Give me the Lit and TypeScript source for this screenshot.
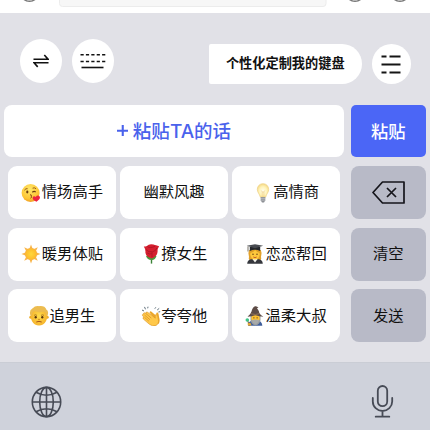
import { LitElement, html, css, svg } from "lit";
import { customElement, property } from "lit/decorators.js";

const art: Record<string, unknown> = {
  kiss: svg`
    <defs><radialGradient id="g" cx=".45" cy=".3" r=".75"><stop offset="0" stop-color="#ffe86b"/><stop offset=".7" stop-color="#fdc534"/><stop offset="1" stop-color="#ec9420"/></radialGradient></defs>
    <circle cx="9.6" cy="10" r="9" fill="url(#g)"/>
    <path d="M3.4 7.2q1.4-2 3.2-1.5M11.6 5.2q1.8-1 3.4.5" fill="none" stroke="#9a5c14" stroke-width="1"/>
    <ellipse cx="6.3" cy="9" rx="1.1" ry="1.4" fill="#6d3d10"/>
    <path d="M11.3 9.2q1.7-1.4 3.4-.3" fill="none" stroke="#6d3d10" stroke-width="1.2"/>
    <path d="M9 11.7q2.4.2 1 1.5q2 .6-.6 2" fill="none" stroke="#8b4614" stroke-width="1"/>
    <path d="M15.400 18.700q-4.300-2-3.700-4.300q1-2 3-.3q1.600-2.400 3.800-.9q1.800 2.300-3.100 5.500z" fill="#ed2440"/>`,
  bulb: svg`
    <defs><radialGradient id="g" cx=".5" cy=".55" r=".6"><stop offset="0" stop-color="#fffef0"/><stop offset=".55" stop-color="#fff3b8"/><stop offset="1" stop-color="#f3d278"/></radialGradient></defs>
    <path d="M10 .7c-3.500 0-5.700 2.600-5.700 5.700c0 3.200 2.300 4.300 3 7.800h5.400c.7-3.500 3-4.600 3-7.800c0-3.100-2.200-5.700-5.700-5.700z" fill="url(#g)" stroke="#eed28a" stroke-width=".7"/>
    <path d="M8.300 7.500l1 1.500h1.500l1-1.500M9.200 9v5M10.900 9v5" stroke="#e9c16c" stroke-width=".5" fill="none"/>
    <path d="M7.700 14h4.600v3.200l-1.300 2.300H9l-1.300-2.300z" fill="#8d9095"/>
    <path d="M7.700 15.300h4.600M7.900 17.100h4.200" stroke="#d5d7da" stroke-width=".6"/>`,
  sun: svg`
    <defs><radialGradient id="g"><stop offset="0" stop-color="#ffd83d"/><stop offset="1" stop-color="#fdb92b"/></radialGradient></defs>
    <path d="M10 .4l1.500 4h-3zM10 19.600l1.500-4h-3zM.4 10l4-1.500v3zM19.600 10l-4-1.500v3zM3.200 3.200l3.900 1.800-2.100 2.100zM16.800 3.200l-3.900 1.800 2.100 2.100zM3.200 16.800l3.900-1.800-2.100-2.100zM16.800 16.800l-3.900-1.800 2.100-2.100z" fill="#f9b64c"/>
    <circle cx="10" cy="10" r="5.800" fill="url(#g)" stroke="#f5a52c" stroke-width=".6"/>`,
  rose: svg`
    <path d="M10.500 12v7.600" stroke="#3b8337" stroke-width="1.400"/>
    <path d="M5 12q3-1 5.500 2.500q2-3.500 5-2.500q-1.500 4.600-5 4q-4 .2-5.500-4z" fill="#4b9a3e"/>
    <path d="M2.800 2.500q1.800 0 3.100-.5Q8-.5 12.500.5q1.300.8 2.600.8l3 .9q-1.800 2.600-1.500 5.600q-.4 4.400-5.800 6.700Q5.200 13.200 4.400 8.800q.4-3.400-1.600-6.300z" fill="#d51f2f"/>
    <path d="M6.300 2.500q2.800 2.300 7.800-.3M5 5.500q2.500 3.200 6.500 2.300q3.500-.8 4.300-3.800M6.300 9q2.200 1.700 4.400.7M11 8.400v4.600" fill="none" stroke="#a81424" stroke-width=".8"/>`,
  grad: svg`
    <path d="M4.200 6Q2.600 9 4 13q-.8 1.500.5 3h11q1.300-1.500.5-3q1.400-4-.2-7z" fill="#e2a12a"/>
    <path d="M2.200 19.800q.2-4 3.800-4.600h8q3.600.6 3.800 4.600z" fill="#35373d"/>
    <path d="M7.400 15l2.600 3.500 2.600-3.500z" fill="#f5f5ee"/>
    <ellipse cx="10" cy="10.300" rx="4.700" ry="5.300" fill="#ffc83c"/>
    <path d="M5.200 9q3.200-.5 5-3q1.600 2.600 4.700 3V5.400H5.200z" fill="#df9f27"/>
    <circle cx="8" cy="10.300" r=".7" fill="#58330f"/><circle cx="12" cy="10.300" r=".7" fill="#58330f"/>
    <path d="M8.300 13q1.700 1.300 3.400 0" fill="none" stroke="#b74422" stroke-width=".8"/>
    <path d="M4.800 3h10.400v4Q10 4.700 4.800 7z" fill="#25272c"/>
    <path d="M1.800 1.800L10 .3l8.200 1.500L10 4.300z" fill="#484b51"/>
    <path d="M3 2.300v5.200" stroke="#575044" stroke-width=".8"/>`,
  man: svg`
    <defs><radialGradient id="g" cx=".5" cy=".5" r=".6"><stop offset="0" stop-color="#ffdc4b"/><stop offset="1" stop-color="#f4ad28"/></radialGradient></defs>
    <circle cx="1.900" cy="11.200" r="1.600" fill="#efad28"/><circle cx="18.100" cy="11.200" r="1.600" fill="#efad28"/>
    <path d="M1.800 9.500Q1.500.3 10 .4Q18.500.3 18.200 9.500Q18 16 14 18.500q-4 2.200-8 0Q2 16 1.800 9.500z" fill="url(#g)"/>
    <path d="M1.300 9Q0 4 3.500 2.500Q6-.3 10 .2Q16-.4 17.300 3.500Q20 5 18.700 9l-1.300 1q0-3.500-2.400-4.500Q9 7 5.300 5Q3 6.200 2.600 10z" fill="#ecbc50"/>
    <path d="M5 9.400q1.400-1.200 3 0M12 9.400q1.600-1.200 3 0" stroke="#9c6b1d" stroke-width=".8" fill="none"/>
    <ellipse cx="6.700" cy="11.300" rx="1.100" ry="1.200" fill="#59350e"/><ellipse cx="13.300" cy="11.300" rx="1.100" ry="1.200" fill="#59350e"/>
    <path d="M9 13.400h2" stroke="#c6821a" stroke-width=".8"/>
    <path d="M7.300 16q2.700-1.300 5.400 0" stroke="#a4511c" stroke-width="1" fill="none"/>`,
  clap: svg`
    <path d="M3 5l-2-1M4.500 3.300L3.500.9M6.700 2.300l.3-1.600M13.800 2.700l1-1.400M16.200 4l2-1.600M17.400 6l1.800-.3" stroke="#60717c" stroke-width="1"/>
    <path d="M8.500 6.500q.8-2 2.300-.6l4.700 4q-.8-4 1-3.400q1.200.4 1.500 4.600q1.500 4.200-.5 7z" fill="#eca72b"/>
    <path d="M2.400 7.400q.8-1.300 2.100-.2l.4.300q-.2-2.200 1.800-1.200l7.600 5.900q-.5-4.200 1.100-3.600q1.500.4 1.900 4.700q1 4.400-2.200 6.100q-3.400 1.400-6.700-1.100l-6.100-5.300q-1-1.600.6-1.900l-1.300-1.300q-.8-1.500.8-1.500z" fill="#ffc849" stroke="#d9942a" stroke-width=".6"/>
    <path d="M4.700 7.400l5.600 4.700M3.500 9l5.500 4.800M3.500 11.300l4.300 3.800" stroke="#d9942a" stroke-width=".8"/>`,
  mage: svg`
    <path d="M3 19.700q.3-4.400 4-5h6.500q3.500.8 3.800 5z" fill="#3f5e9b"/>
    <path d="M5.500 10h10v4q-.4 4-5 5.600q-4.600-1.600-5-5.600z" fill="#9a9d9e"/>
    <ellipse cx="10.500" cy="12" rx="4.200" ry="3.800" fill="#ffc232"/>
    <path d="M6.800 14.300q2-.8 3.700-.7q1.700-.1 3.700.7q-.7 3.100-3.700 4q-3-.9-3.700-4z" fill="#a8aaa9"/>
    <circle cx="8.900" cy="11.800" r=".6" fill="#573610"/><circle cx="12.100" cy="11.800" r=".6" fill="#573610"/>
    <path d="M2.500 10.800q3-2 4-5.200Q7.300 1.500 10 .3q2.200-.5 3.500 1.800l-1.600-.2q2.400 3 2.500 5.400q1.500 2.300 4 3.500q-4-.5-8-1.500q-4 1.300-7.900 1.500z" fill="#5d4c46"/>
    <path d="M6 7.800q4.500 1.500 8.500-.2" stroke="#91725a" stroke-width="1" fill="none"/>
    <path d="M2.500 14l1.800 5.700" stroke="#75503b" stroke-width="1"/>
    <circle cx="2.300" cy="14" r="1.800" fill="#3ec584"/><path d="M2.500 17.500l3-.7 1 2.800H3z" fill="#e8ab31"/>`,
};

@customElement("emoji-art")
class EmojiArt extends LitElement {
  @property() name = "";
  static styles = css`
    :host { display: block; width: 20px; height: 20px; flex: none; }
    svg { display: block; width: 20px; height: 20px; }
  `;
  render() {
    return html`<svg viewBox="0 0 20 20">${art[this.name]}</svg>`;
  }
}

const phrases = [
  ["kiss", "情场高手"], ["", "幽默风趣"], ["bulb", "高情商"],
  ["sun", "暖男体贴"], ["rose", "撩女生"], ["grad", "恋恋帮回"],
  ["man", "追男生"], ["clap", "夸夸他"], ["mage", "温柔大叔"],
];

@customElement("app-root")
class AppRoot extends LitElement {
  static styles = css`
    :host {
      display: flex; flex-direction: column; width: 430px; height: 430px; overflow: hidden;
      background: #e1e1e7; color: #111;
      font-family: "Noto Sans CJK SC", sans-serif;
    }
    * { box-sizing: border-box; }
    svg { display: block; flex: none; fill: none; }
    .chat { height: 13px; flex: none; background: #fff; overflow: hidden; }
    .tools { height: 92px; flex: none; display: flex; align-items: flex-start; padding: 26px 19px 0 19.5px; }
    .round { width: 42px; height: 44px; border-radius: 50%; background: #fff; display: grid; place-items: center; flex: none; }
    .round + .round { margin-left: 10.5px; }
    .bubble {
      width: 153.5px; height: 40px; margin: 5px 9.5px 0 auto; background: #fff;
      border-radius: 2px 20px 20px 2px; display: grid; place-items: center;
      font-size: 13.2px; font-weight: 700; line-height: 20px; white-space: nowrap; padding-bottom: 2px;
    }
    .menu { width: 39.5px; height: 40px; margin-top: 5px; }
    .paste { display: grid; grid-template-columns: 340px 74.5px; gap: 7px; padding-left: 4px; height: 52px; flex: none; }
    .field, .primary { display: flex; align-items: center; justify-content: center; line-height: 26px; padding-bottom: 1px; }
    .field { background: #fff; border-radius: 8px; color: #4a62ec; font-size: 18.5px; font-weight: 500; }
    .latin { font-family: Inter, "Liberation Sans", sans-serif; font-size: 19px; }
    .plus { width: 11.5px; height: 11.5px; margin-right: 4.5px; }
    .primary { background: #4b66f6; border-radius: 5px; color: #fff; font-size: 17.3px; font-weight: 500; }
    .board { display: grid; grid-template-columns: 332px 74.5px; column-gap: 11px; padding: 9px 0 0 8px; height: 205px; flex: none; }
    .phrases { display: grid; grid-template-columns: repeat(3, 108.3px); grid-auto-rows: 53.3px; gap: 8.3px 3.55px; align-content: start; }
    .side { display: grid; grid-auto-rows: 53.3px; gap: 8.3px; align-content: start; }
    .key {
      background: #fff; border-radius: 9px; display: flex; align-items: center; justify-content: center;
      gap: .5px; font-size: 15.3px; line-height: 22px; white-space: nowrap;
    }
    .label { padding-bottom: 4.4px; }
    .gray { background: #b8bac7; border-radius: 8px; }
    .system { flex: 1; background: #cfd2db; border-top: 1px solid #cacdd5; display: flex; justify-content: space-between; padding: 22px 36px 0 31px; }
  `;
  render() {
    return html`
      <div class="chat">
        <svg width="430" height="13">
          <rect x="59.5" y="-30" width="266.5" height="36.5" rx="3" fill="#f7f7f7" stroke="#ececec"/>
          <g stroke="#777" stroke-width="1.4"><circle cx="29.5" cy="-8" r="9.3"/><circle cx="355" cy="-8" r="9.3"/><circle cx="400" cy="-8" r="9.3"/></g>
        </svg>
      </div>
      <div class="tools">
        <div class="round">
          <svg width="16" height="14" viewBox="0 0 16 14" stroke="#111" stroke-width="1.6"><path d="M.5 5.2h14.500L11.300 1M15.500 8.700H1l3.700 4.200"/></svg>
        </div>
        <div class="round">
          <svg width="26" height="16" viewBox="0 0 26 16" stroke="#111" stroke-width="1.6"><path d="M.5 1.700h25M.5 8.500h25" stroke-dasharray="3.2 2.2"/><path d="M1.500 14.500h22"/></svg>
        </div>
        <div class="bubble">个性化定制我的键盘</div>
        <div class="round menu">
          <svg width="20" height="19" viewBox="0 0 20 19" stroke="#151515" stroke-width="1.8"><path d="M.5 1.500h5M8.500 1.500h11M.5 9.500h19M.5 17.500h5M8.500 17.500h11"/></svg>
        </div>
      </div>
      <div class="paste">
        <div class="field"><svg class="plus" viewBox="0 0 11 11" stroke="#4a62ec" stroke-width="2"><path d="M0 5.500h11M5.500 0v11"/></svg><span>粘贴<span class="latin">TA</span>的话</span></div>
        <div class="primary">粘贴</div>
      </div>
      <div class="board">
        <div class="phrases">
          ${phrases.map(([icon, label]) => html`<div class="key">${icon ? html`<emoji-art name=${icon}></emoji-art>` : ""}<span class="label">${label}</span></div>`)}
        </div>
        <div class="side">
          <div class="key gray">
            <svg width="33" height="23" viewBox="0 0 33 23" stroke="#15151b" stroke-width="1.7" stroke-linejoin="round"><path d="M10.500 1H32v21H10.500L1 11.500zM15 7l9 9M24 7l-9 9"/></svg>
          </div>
          <div class="key gray"><span class="label">清空</span></div>
          <div class="key gray"><span class="label">发送</span></div>
        </div>
      </div>
      <div class="system">
        <svg width="31" height="33" viewBox="0 0 31 33" stroke="#474b56" stroke-width="1.6">
          <ellipse cx="15.500" cy="17" rx="14.200" ry="14.600"/><ellipse cx="15.500" cy="17" rx="6.800" ry="14.600"/>
          <path d="M15.500 2.400v29.200M1.300 17h28.400M5 7.300q10.500 6 21 0M5 26.700q10.500-6 21 0"/>
        </svg>
        <svg width="23" height="34" viewBox="0 0 23 34" stroke="#474b56" stroke-width="1.8" stroke-linecap="round">
          <rect x="6.800" y="1" width="9.400" height="20.200" rx="4.700"/>
          <path d="M1.800 13v3.500a9.700 9.500 0 0 0 19.400 0V13M11.500 26v5.500M4.700 31.700h13.600"/>
        </svg>
      </div>`;
  }
}
